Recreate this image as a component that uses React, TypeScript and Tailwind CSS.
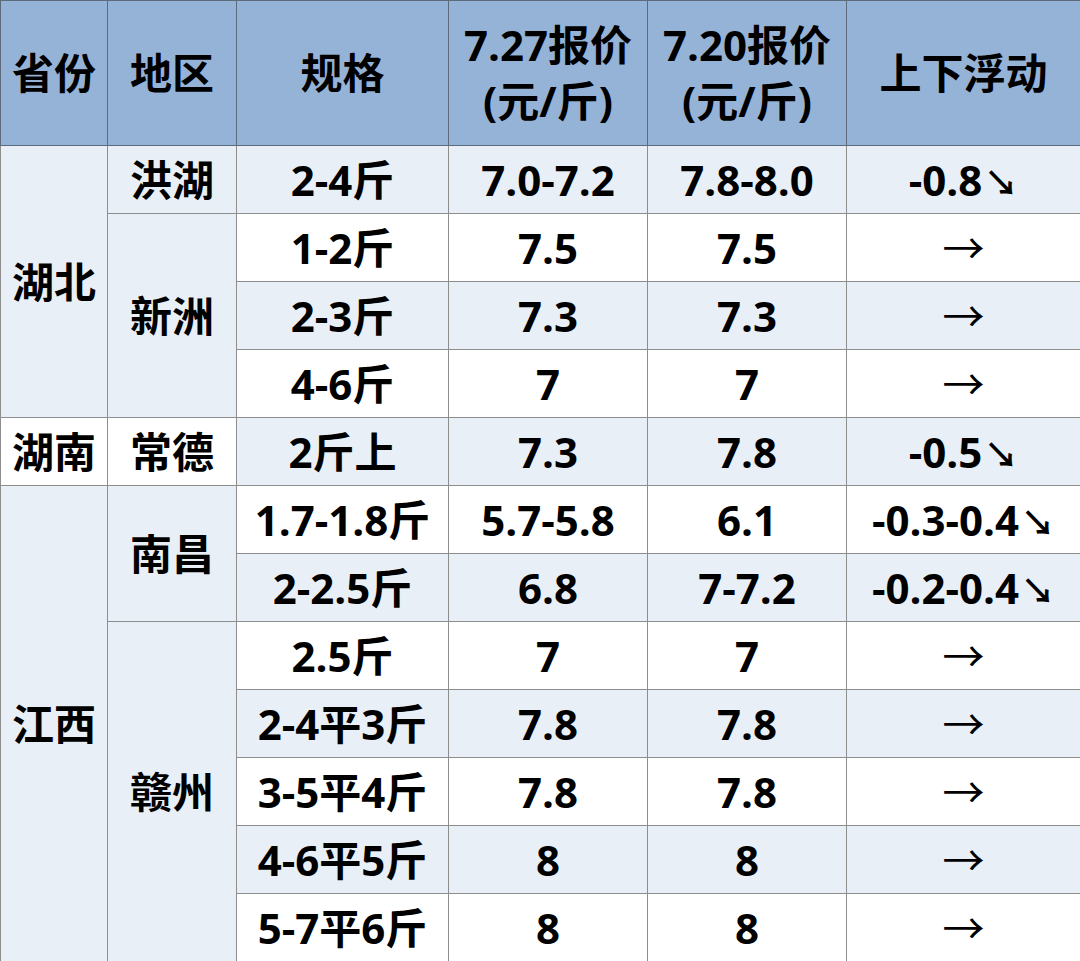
import React from "react";

type Row = {
  prov?: { name: string; span: number; light: boolean };
  city?: { name: string; span: number; light: boolean };
  spec: string;
  p1: string;
  p2: string;
  chg: string;
  light: boolean;
};

const rows: Row[] = [
  { prov: { name: "湖北", span: 4, light: true }, city: { name: "洪湖", span: 1, light: true }, spec: "2-4斤", p1: "7.0-7.2", p2: "7.8-8.0", chg: "-0.8↘", light: true },
  { city: { name: "新洲", span: 3, light: true }, spec: "1-2斤", p1: "7.5", p2: "7.5", chg: "→", light: false },
  { spec: "2-3斤", p1: "7.3", p2: "7.3", chg: "→", light: true },
  { spec: "4-6斤", p1: "7", p2: "7", chg: "→", light: false },
  { prov: { name: "湖南", span: 1, light: false }, city: { name: "常德", span: 1, light: false }, spec: "2斤上", p1: "7.3", p2: "7.8", chg: "-0.5↘", light: true },
  { prov: { name: "江西", span: 7, light: true }, city: { name: "南昌", span: 2, light: true }, spec: "1.7-1.8斤", p1: "5.7-5.8", p2: "6.1", chg: "-0.3-0.4↘", light: false },
  { spec: "2-2.5斤", p1: "6.8", p2: "7-7.2", chg: "-0.2-0.4↘", light: true },
  { city: { name: "赣州", span: 5, light: true }, spec: "2.5斤", p1: "7", p2: "7", chg: "→", light: false },
  { spec: "2-4平3斤", p1: "7.8", p2: "7.8", chg: "→", light: true },
  { spec: "3-5平4斤", p1: "7.8", p2: "7.8", chg: "→", light: false },
  { spec: "4-6平5斤", p1: "8", p2: "8", chg: "→", light: true },
  { spec: "5-7平6斤", p1: "8", p2: "8", chg: "→", light: false },
];

function Chg({ v }: { v: string }) {
  if (v === "→") {
    return <span className="font-normal" style={{}}>→</span>;
  }
  const num = v.slice(0, -1);
  return (
    <span>
      {num}
      <span className="ml-[2px] text-[34px] font-bold">↘</span>
    </span>
  );
}

export default function App() {
  const td = "border border-[#8e8e8e] text-center align-middle p-0";
  const th = "border border-[#5d6b7c] bg-[#95b3d7] text-center align-middle p-0 font-bold";
  return (
    <div
      className="w-[1080px] h-[961px] overflow-hidden bg-white text-black font-bold"
      style={{ fontFamily: '"Open Sans", "Noto Sans CJK SC", sans-serif' }}
    >
      <table className="w-[1080px] border-collapse table-fixed text-[42px] leading-none">
        <colgroup>
          <col className="w-[107px]" />
          <col className="w-[129px]" />
          <col className="w-[212px]" />
          <col className="w-[199px]" />
          <col className="w-[199px]" />
          <col className="w-[234px]" />
        </colgroup>
        <thead>
          <tr className="h-[145px]">
            <th className={th}>省份</th>
            <th className={th}>地区</th>
            <th className={th}>规格</th>
            <th className={th + " leading-[56px]"}>
              7.27报价
              <br />
              (元/斤)
            </th>
            <th className={th + " leading-[56px]"}>
              7.20报价
              <br />
              (元/斤)
            </th>
            <th className={th}>上下浮动</th>
          </tr>
        </thead>
        <tbody>
          {rows.map((r, i) => {
            const bg = r.light ? "bg-[#e9eff7]" : "bg-white";
            return (
              <tr key={i} className="h-[68px]">
                {r.prov && (
                  <td rowSpan={r.prov.span} className={td + " " + (r.prov.light ? "bg-[#e9eff7]" : "bg-white")}>
                    {r.prov.name}
                  </td>
                )}
                {r.city && (
                  <td rowSpan={r.city.span} className={td + " " + (r.city.light ? "bg-[#e9eff7]" : "bg-white")}>
                    {r.city.name}
                  </td>
                )}
                <td className={td + " " + bg}>{r.spec}</td>
                <td className={td + " " + bg}>{r.p1}</td>
                <td className={td + " " + bg}>{r.p2}</td>
                <td className={td + " " + bg}>
                  <Chg v={r.chg} />
                </td>
              </tr>
            );
          })}
        </tbody>
      </table>
    </div>
  );
}
